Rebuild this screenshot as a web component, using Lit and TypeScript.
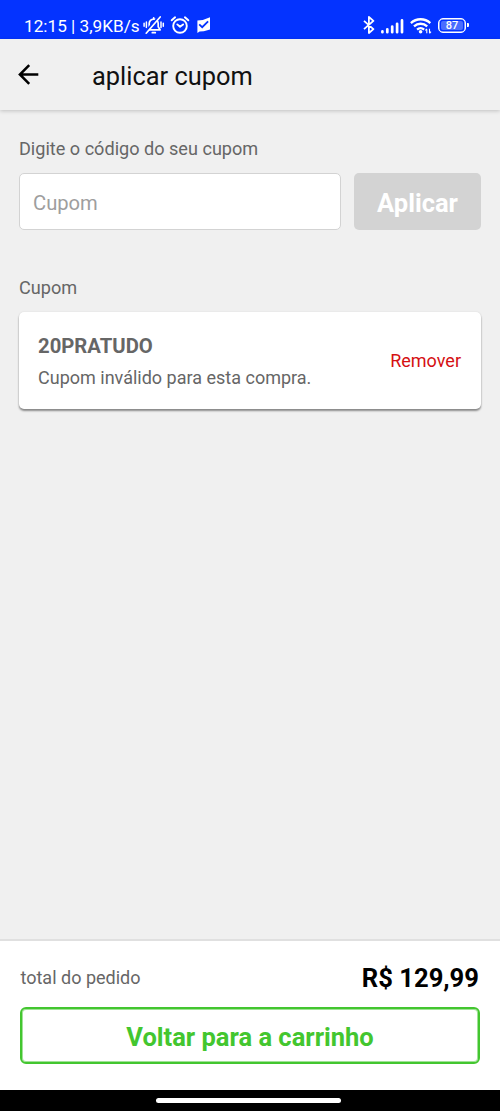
import { LitElement, css, html } from 'lit'
import { customElement, property } from 'lit/decorators.js'

@customElement('status-bar')
export class StatusBar extends LitElement {
  @property({
    type: String,
  })
  time: string = ''

  @property({
    type: String,
  })
  speed: string = ''

  @property({
    type: Number,
  })
  battery: number = 100

  protected render() {
    return html`
      <span class="status__text">${this.time} | ${this.speed}</span>
      <svg class="status__bell" width="22" height="20" viewBox="0 0 22 20">
        <g fill="none" stroke="#fff" stroke-width="1.7" stroke-linecap="round" stroke-linejoin="round">
          <path d="M6.2 13.6V8.6a4.5 4.5 0 0 1 9 0v3.2l2 3.1H4.6z" />
          <path d="M9.3 17.7h3M10.7 2.8v1" />
          <path d="M1.1 8.2v3M3.4 6.9v5.6M18 6.9v5.6M20.3 8.2v3" stroke-width="1.5" />
        </g>
        <path d="M16.2 1.6L2 17.2" stroke="#0433ff" stroke-width="2.4" />
        <path d="M17.2 2L3.2 18.2" stroke="#fff" stroke-width="1.7" stroke-linecap="round" />
      </svg>
      <svg class="status__alarm" width="20" height="20" viewBox="0 0 20 20">
        <g fill="none" stroke="#fff" stroke-width="1.9" stroke-linecap="round" stroke-linejoin="round">
          <circle cx="10" cy="11" r="6.8" />
          <path d="M1.7 5.3l3.4-3M18.3 5.3l-3.4-3" />
          <path d="M7.3 9.4l2.7 2.4 3.1-2.4" />
        </g>
      </svg>
      <svg class="status__flag" width="14" height="18" viewBox="0 0 14 18">
        <path d="M.4 4.4l5.4-.5L13 1.3v12.3l-6.2 1.6-4.2.3-2.2 1.6z" fill="#fff" />
        <path d="M2.2 8.4l3 2.8 5.9-5.9" fill="none" stroke="#0433ff" stroke-width="1.8" />
      </svg>
      <span class="status__spacer"></span>
      <svg class="status__bluetooth" width="12" height="18" viewBox="0 0 12 18">
        <path
          d="M1 4.8l9.4 8.3L5.9 17V1l4.5 3.9L1 13.2"
          fill="none"
          stroke="#fff"
          stroke-width="1.8"
          stroke-linejoin="round"
        />
      </svg>
      <svg class="status__signal" width="23" height="15" viewBox="0 0 23 15">
        <path
          d="M1.4 12.4v.8M6.3 10.3v2.9M11.2 7.5v5.7M16.1 4.8v8.4M21 1.4v11.8"
          fill="none"
          stroke="#fff"
          stroke-width="2.7"
          stroke-linecap="round"
        />
      </svg>
      <svg class="status__wifi" width="22" height="17" viewBox="0 0 22 17">
        <g fill="none" stroke="#fff" stroke-width="2.3">
          <path d="M.9 6.1a14.2 14.2 0 0 1 19.4 0" />
          <path d="M4 9.4a9.6 9.6 0 0 1 13.2 0" />
          <path d="M7.1 12.6a5.2 5.2 0 0 1 7 0" />
        </g>
        <circle cx="10.6" cy="14.7" r="1.8" fill="#fff" />
        <path d="M16.8 12.2v4M16.8 11.8l-1.5 1.7M19.5 11.8v4M19.5 16.3l1.5-1.7" fill="none" stroke="#fff" stroke-width="1.1" />
      </svg>
      <span class="status__battery"><span class="status__level">${this.battery}</span></span>
      <span class="status__cap"></span>
    `
  }

  static styles = css`
    :host {
      display: flex;
      align-items: flex-start;
      box-sizing: border-box;
      height: 39px;
      padding: 16px 31px 0 24px;
      background: #0433ff;
      color: #fff;
    }

    svg {
      flex: none;
    }

    .status__text {
      width: 119px;
      font-size: 17.2px;
      line-height: 20px;
      white-space: nowrap;
    }

    .status__bell {
      margin-top: -1px;
    }

    .status__alarm {
      margin-left: 5px;
      margin-top: -1px;
    }

    .status__flag {
      margin-left: 7px;
    }

    .status__spacer {
      flex: 1;
    }

    .status__signal {
      margin-left: 6px;
      margin-top: 3px;
    }

    .status__wifi {
      margin-left: 6px;
      margin-top: 1px;
    }

    .status__battery {
      box-sizing: border-box;
      width: 28px;
      height: 15px;
      margin: 2px 0 0 6px;
      padding: 2px;
      border: 1px solid #fff;
      border-radius: 5px;
      box-shadow: inset 0 0 0 0.5px #fff;
    }

    .status__level {
      display: block;
      height: 9px;
      border-radius: 2px;
      background: #4a6dff;
      font-size: 11px;
      font-weight: 500;
      line-height: 10px;
      text-align: center;
    }

    .status__cap {
      width: 2px;
      height: 4px;
      margin: 7px 0 0 1px;
      border-radius: 0 1px 1px 0;
      background: #fff;
    }
  `
}

@customElement('coupon-card')
export class CouponCard extends LitElement {
  @property({
    type: String,
  })
  code: string = ''

  @property({
    type: String,
  })
  message: string = ''

  protected render() {
    return html`
      <div class="coupon__body">
        <span class="coupon__code">${this.code}</span>
        <span class="coupon__message">${this.message}</span>
      </div>
      <span class="coupon__remove">Remover</span>
    `
  }

  static styles = css`
    :host {
      display: flex;
      align-items: center;
      justify-content: space-between;
      box-sizing: border-box;
      height: 97px;
      padding: 2px 20px 0 19px;
      border-radius: 5px;
      background: #fff;
      box-shadow: 0 2px 2px rgba(0, 0, 0, 0.42), 0 0 2px rgba(0, 0, 0, 0.1);
    }

    .coupon__body {
      display: flex;
      flex-direction: column;
      gap: 8px;
      color: #666;
    }

    .coupon__code {
      font-size: 20.3px;
      font-weight: 700;
      line-height: 24px;
    }

    .coupon__message {
      font-size: 18px;
      line-height: 24px;
    }

    .coupon__remove {
      margin-bottom: 1px;
      color: #d50f12;
      font-size: 18px;
      line-height: 24px;
    }
  `
}

@customElement('app-root')
export class AppRoot extends LitElement {
  protected render() {
    return html`
      <status-bar time="12:15" speed="3,9KB/s" battery="87"></status-bar>
      <header class="header">
        <svg width="22" height="22" viewBox="0 0 22 22">
          <path d="M20.3 10.5H2M11.2 1.2L1.9 10.5l9.3 9.3" fill="none" stroke="#000" stroke-width="2.5" />
        </svg>
        <span class="header__title">aplicar cupom</span>
      </header>
      <main class="content">
        <span class="label">Digite o código do seu cupom</span>
        <div class="form">
          <div class="form__input">Cupom</div>
          <div class="form__button">Aplicar</div>
        </div>
        <span class="label label--list">Cupom</span>
        <coupon-card code="20PRATUDO" message="Cupom inválido para esta compra."></coupon-card>
      </main>
      <footer class="footer">
        <div class="footer__row">
          <span class="footer__label">total do pedido</span>
          <span class="footer__total">R$ 129,99</span>
        </div>
        <div class="footer__button">Voltar para a carrinho</div>
      </footer>
      <div class="navigation"><span class="navigation__handle"></span></div>
    `
  }

  static styles = css`
    :host {
      display: flex;
      flex-direction: column;
      width: 500px;
      height: 1111px;
      overflow: hidden;
      background: #f0f0f0;
      font-family: Roboto, 'Liberation Sans', sans-serif;
    }

    .header {
      display: flex;
      align-items: center;
      box-sizing: border-box;
      flex: none;
      height: 71px;
      padding: 0 18px;
      box-shadow: 0 1px 4px rgba(0, 0, 0, 0.2);
    }

    .header__title {
      margin: 3px 0 0 52px;
      color: #111;
      font-size: 25.4px;
      line-height: 32px;
    }

    .content {
      display: flex;
      flex: 1;
      flex-direction: column;
      padding: 27px 19px 0;
    }

    .label {
      color: #666;
      font-size: 18.1px;
      line-height: 24px;
    }

    .label--list {
      margin: 46px 0 12px;
    }

    .form {
      display: flex;
      gap: 13px;
      margin-top: 12px;
    }

    .form__input {
      box-sizing: border-box;
      flex: 1;
      height: 57px;
      padding: 0 13px;
      border: 1px solid #d3d3d3;
      border-radius: 5px;
      background: #fff;
      color: #9e9e9e;
      font-size: 20.2px;
      line-height: 58px;
    }

    .form__button {
      width: 127px;
      height: 57px;
      border-radius: 5px;
      background: #d3d3d3;
      color: #fff;
      font-size: 25.5px;
      font-weight: 700;
      line-height: 60px;
      text-align: center;
    }

    .footer {
      box-sizing: border-box;
      flex: none;
      height: 151px;
      padding: 20px 20px 0;
      border-top: 2px solid #e0e0e0;
      background: #fff;
    }

    .footer__row {
      display: flex;
      align-items: center;
      justify-content: space-between;
      height: 32px;
      padding: 0 1px 0 0.5px;
    }

    .footer__label {
      color: #666;
      font-size: 18px;
    }

    .footer__total {
      margin-top: 2px;
      color: #000;
      font-size: 25.6px;
      font-weight: 700;
    }

    .footer__button {
      box-sizing: border-box;
      height: 57px;
      margin-top: 14px;
      border: 2px solid #43c62f;
      border-radius: 6px;
      box-shadow: inset 0 0 0 1px rgba(67, 198, 47, 0.5);
      color: #43c62f;
      font-size: 25.5px;
      font-weight: 700;
      line-height: 57px;
      text-align: center;
    }

    .navigation {
      display: flex;
      justify-content: center;
      flex: none;
      height: 21px;
      background: #000;
    }

    .navigation__handle {
      width: 185px;
      height: 5px;
      margin: 8px 4px 0 0;
      border-radius: 3px;
      background: #fff;
    }
  `
}

declare global {
  interface HTMLElementTagNameMap {
    'status-bar': StatusBar
    'coupon-card': CouponCard
    'app-root': AppRoot
  }
}
